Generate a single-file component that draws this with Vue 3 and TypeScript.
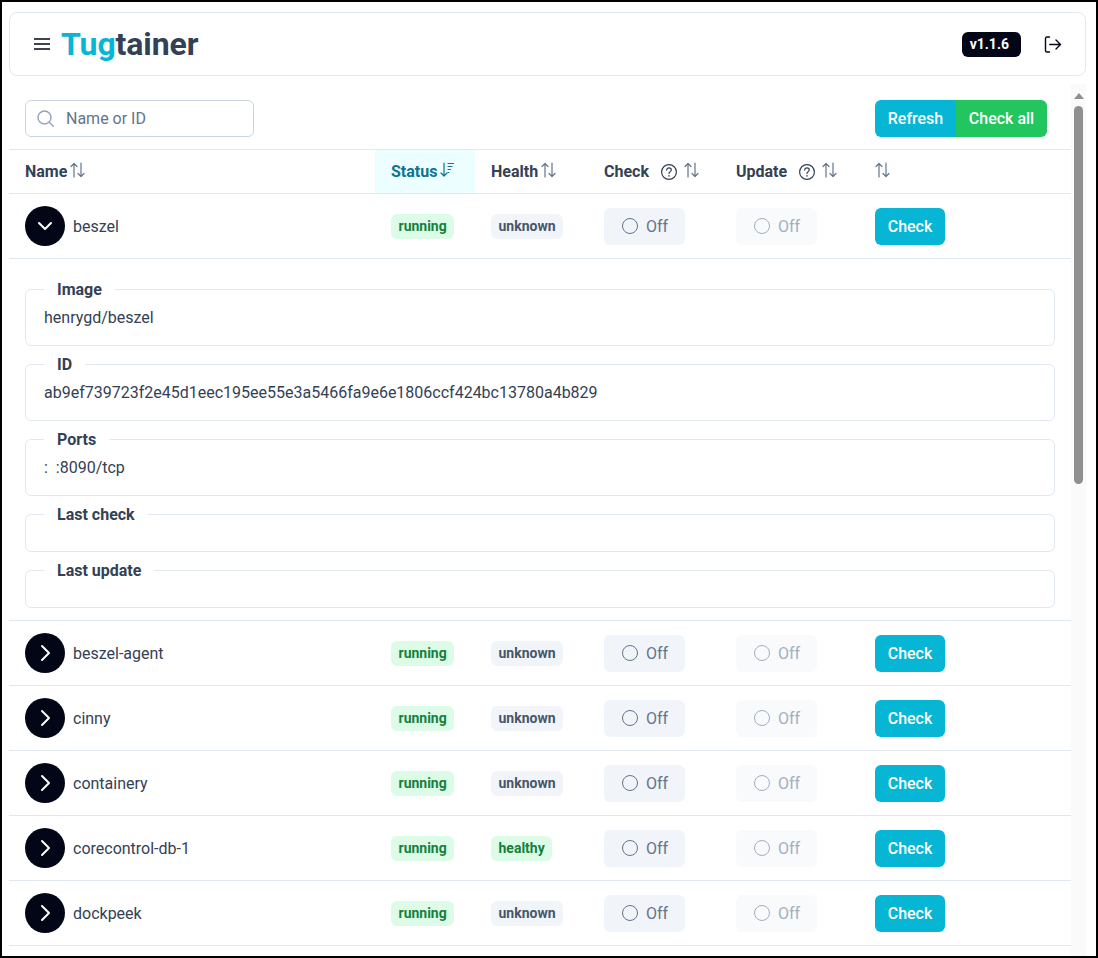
<template>
  <div class="page">
    <header class="topbar">
      <div class="topbar__left">
        <button class="icon-btn" type="button" aria-label="Menu">
          <svg width="16" height="12" viewBox="0 0 16 12" fill="none" stroke="#020617" stroke-width="1.6">
            <path d="M0 1h16M0 6h16M0 11h16" />
          </svg>
        </button>
        <h1 class="logo"><span class="logo__accent">Tug</span>tainer</h1>
      </div>
      <div class="topbar__right">
        <span class="version">v1.1.6</span>
        <button class="icon-btn" type="button" aria-label="Log out">
          <svg width="18" height="17" viewBox="0 0 18 17" fill="none" stroke="#020617" stroke-width="1.4" stroke-linecap="round" stroke-linejoin="round">
            <path d="M5.500 1H3C2.100 1 1.500 1.600 1.500 2.500v12c0 .9.6 1.500 1.500 1.500h2.500" />
            <path d="M5.800 8.500h10.700M12 4l4.500 4.500L12 13" />
          </svg>
        </button>
      </div>
    </header>

    <div class="main">
      <div class="content">
        <div class="toolbar">
          <label class="search">
            <svg width="17" height="17" viewBox="0 0 17 17" fill="none" stroke="#94a3b8" stroke-width="1.4" stroke-linecap="round">
              <circle cx="7.500" cy="7.500" r="6.500" />
              <path d="M12.300 12.300l4 4" />
            </svg>
            <input type="text" placeholder="Name or ID" />
          </label>
          <div class="actions">
            <button class="btn btn--cyan btn--left" type="button">Refresh</button>
            <button class="btn btn--green btn--right" type="button">Check all</button>
          </div>
        </div>

        <div class="row row--head">
          <div v-for="col in columns" :key="col.key" class="head-cell" :class="{ 'head-cell--active': col.active }">
            <span v-if="col.label" class="head-cell__label">{{ col.label }}</span>
            <svg v-if="col.help" class="help" width="16" height="16" viewBox="0 0 16 16" fill="none" stroke="#334155" stroke-width="1.200" stroke-linecap="round">
              <circle cx="8" cy="8" r="7.400" />
              <path d="M5.700 6.100C5.700 4.800 6.700 3.900 8 3.900s2.300.9 2.300 2.100c0 1.700-2.300 1.600-2.300 3.500" />
              <path d="M8 11.800v.2" stroke-width="1.500" />
            </svg>
            <svg v-if="col.active" class="sort" width="14" height="16" viewBox="0 0 14 16" fill="none" stroke="currentColor" stroke-width="1.200" stroke-linecap="round" stroke-linejoin="round">
              <path d="M4 1v13M1 11l3 3 3-3" />
              <path d="M8 1.500h5.500M8 4.500h4M8 7.500h2.500M8 10.500h.8" />
            </svg>
            <svg v-else class="sort" width="15" height="16" viewBox="0 0 15 16" fill="none" stroke="#64748b" stroke-width="1.200" stroke-linecap="round" stroke-linejoin="round">
              <path d="M4 15V1.500M1 4.500l3-3 3 3" />
              <path d="M11 1v13.500M8 11.500l3 3 3-3" />
            </svg>
          </div>
        </div>

        <template v-for="item in containers" :key="item.name">
          <div class="row">
            <div class="cell cell--name">
              <button class="expander" type="button" :aria-label="'Toggle ' + item.name">
                <svg v-if="item.details" width="18" height="18" viewBox="0 0 18 18" fill="none" stroke="#fff" stroke-width="2" stroke-linecap="round" stroke-linejoin="round">
                  <path d="M3 6l6 6 6-6" />
                </svg>
                <svg v-else width="18" height="18" viewBox="0 0 18 18" fill="none" stroke="#fff" stroke-width="2" stroke-linecap="round" stroke-linejoin="round">
                  <path d="M6 2l7 7-7 7" />
                </svg>
              </button>
              <span>{{ item.name }}</span>
            </div>
            <div class="cell"><span class="badge badge--green">running</span></div>
            <div class="cell">
              <span class="badge" :class="item.health === 'healthy' ? 'badge--green' : 'badge--gray'">{{ item.health }}</span>
            </div>
            <div class="cell">
              <button class="toggle" type="button">
                <span class="toggle__dot"></span>Off
              </button>
            </div>
            <div class="cell">
              <button class="toggle toggle--disabled" type="button" disabled>
                <span class="toggle__dot"></span>Off
              </button>
            </div>
            <div class="cell">
              <button class="btn btn--cyan btn--check" type="button">Check</button>
            </div>
          </div>

          <div v-if="item.details" class="details">
            <fieldset v-for="field in item.details" :key="field.label" class="field">
              <legend>{{ field.label }}</legend>
              <div class="field__value">{{ field.value }}</div>
            </fieldset>
          </div>
        </template>
      </div>

      <div class="scrollbar">
        <span class="scrollbar__arrow"></span>
        <span class="scrollbar__thumb"></span>
      </div>
    </div>
  </div>
</template>

<script setup lang="ts">
interface Column {
  key: string;
  label: string;
  active?: boolean;
  help?: boolean;
}

interface Detail {
  label: string;
  value: string;
}

interface Container {
  name: string;
  health: string;
  details?: Detail[];
}

const columns: Column[] = [
  { key: 'name', label: 'Name' },
  { key: 'status', label: 'Status', active: true },
  { key: 'health', label: 'Health' },
  { key: 'check', label: 'Check', help: true },
  { key: 'update', label: 'Update', help: true },
  { key: 'actions', label: '' },
];

const containers: Container[] = [
  {
    name: 'beszel',
    health: 'unknown',
    details: [
      { label: 'Image', value: 'henrygd/beszel' },
      { label: 'ID', value: 'ab9ef739723f2e45d1eec195ee55e3a5466fa9e6e1806ccf424bc13780a4b829' },
      { label: 'Ports', value: ':\u00a0\u00a0:8090/tcp' },
      { label: 'Last check', value: '' },
      { label: 'Last update', value: '' },
    ],
  },
  { name: 'beszel-agent', health: 'unknown' },
  { name: 'cinny', health: 'unknown' },
  { name: 'containery', health: 'unknown' },
  { name: 'corecontrol-db-1', health: 'healthy' },
  { name: 'dockpeek', health: 'unknown' },
];
</script>

<style>
html,
body {
  margin: 0;
  background: #fff;
}
</style>

<style scoped>
.page {
  box-sizing: border-box;
  display: flex;
  flex-direction: column;
  height: 958px;
  padding: 10px 10px 0 7px;
  overflow: hidden;
  border: 2px solid #000;
  background: #fff;
  color: #334155;
  font-family: Roboto, "Liberation Sans", sans-serif;
  font-size: 16px;
}

.topbar {
  display: flex;
  flex: none;
  align-items: center;
  justify-content: space-between;
  box-sizing: border-box;
  height: 64px;
  padding: 0 16px 0 24px;
  border: 1px solid #e2e8f0;
  border-radius: 8px;
}

.topbar__left,
.topbar__right {
  display: flex;
  align-items: center;
}

.topbar__left {
  gap: 12px;
}

.topbar__right {
  gap: 23px;
  padding-right: 7px;
}

.icon-btn {
  display: flex;
  padding: 0;
  border: 0;
  background: none;
}

.logo {
  margin: 0 0 0 -1px;
  color: #334155;
  font-size: 32px;
  font-weight: 700;
  line-height: 38px;
  letter-spacing: -0.1px;
}

.logo__accent {
  color: #06b6d4;
}

.version {
  display: flex;
  align-items: center;
  height: 25px;
  padding: 0 12px 0 8px;
  border-radius: 6px;
  background: #020617;
  color: #fff;
  font-size: 14px;
  font-weight: 700;
}

.main {
  display: flex;
  flex: 1;
  min-height: 0;
  margin-top: 8px;
}

.content {
  flex: 1;
  min-width: 0;
}

.toolbar {
  display: flex;
  align-items: center;
  justify-content: space-between;
  height: 37px;
  padding: 16px 24px 12px 16px;
}

.search {
  display: flex;
  align-items: center;
  gap: 12px;
  box-sizing: border-box;
  width: 229px;
  height: 37px;
  padding: 0 11px;
  border: 1px solid #cbd5e1;
  border-radius: 6px;
}

.search input {
  width: 170px;
  padding: 0;
  border: 0;
  outline: none;
  color: #334155;
  font: inherit;
}

.search input::placeholder {
  color: #64748b;
  opacity: 1;
}

.actions {
  display: flex;
}

.btn {
  height: 37px;
  padding: 0;
  border: 0;
  border-radius: 6px;
  color: #fff;
  font-family: inherit;
  font-size: 16px;
  font-weight: 500;
  white-space: nowrap;
}

.btn--cyan {
  background: #06b6d4;
}

.btn--green {
  background: #22c55e;
}

.btn--left {
  width: 81px;
  border-radius: 6px 0 0 6px;
}

.btn--right {
  width: 91px;
  border-radius: 0 6px 6px 0;
}

.btn--check {
  width: 70px;
}

.row {
  display: grid;
  grid-template-columns: 366px 100px 113px 132px 139px 1fr;
  align-items: center;
  box-sizing: border-box;
  height: 65px;
  border-bottom: 1px solid #e2e8f0;
}

.row--head {
  align-items: stretch;
  height: 45px;
  border-top: 1px solid #e2e8f0;
}

.head-cell {
  display: flex;
  align-items: center;
  padding-left: 16px;
  font-weight: 700;
}

.head-cell--active {
  background: #ecfeff;
  color: #0e7490;
}

.head-cell__label {
  margin-right: 3px;
}

.sort {
  margin-top: -4px;
}

.help {
  margin: 0 7px 0 9px;
}

.cell {
  padding-left: 16px;
}

.cell--name {
  display: flex;
  align-items: center;
  gap: 8px;
}

.expander {
  display: flex;
  align-items: center;
  justify-content: center;
  width: 40px;
  height: 40px;
  padding: 0;
  border: 0;
  border-radius: 50%;
  background: #020617;
}

.badge {
  display: inline-flex;
  align-items: center;
  height: 25px;
  padding: 0 7.5px;
  border-radius: 6px;
  font-size: 14px;
  font-weight: 700;
}

.badge--green {
  background: #dcfce7;
  color: #15803d;
}

.badge--gray {
  background: #f1f5f9;
  color: #475569;
}

.toggle {
  display: inline-flex;
  align-items: center;
  gap: 8px;
  box-sizing: border-box;
  width: 81px;
  height: 37px;
  padding: 0 0 0 18px;
  border: 0;
  border-radius: 6px;
  background: #f1f5f9;
  color: #64748b;
  font-family: inherit;
  font-size: 16px;
}

.toggle__dot {
  box-sizing: border-box;
  width: 16px;
  height: 16px;
  border: 1.5px solid #64748b;
  border-radius: 50%;
}

.toggle--disabled {
  background: #f8fafc;
  color: #a3afbf;
}

.toggle--disabled .toggle__dot {
  border-color: #a3afbf;
}

.details {
  display: flex;
  flex-direction: column;
  gap: 5px;
  padding: 17px 16px 12px;
  border-bottom: 1px solid #e2e8f0;
}

.field {
  min-width: 0;
  margin: 0;
  padding: 4px 18px 15px;
  border: 1px solid #e2e8f0;
  border-radius: 6px;
}

.field legend {
  padding: 2px 13px 0;
  font-weight: 700;
  line-height: 24px;
}

.field__value {
  min-height: 5px;
  line-height: 24px;
}

.scrollbar {
  display: flex;
  flex: none;
  flex-direction: column;
  align-items: center;
  box-sizing: border-box;
  width: 15px;
  padding-top: 9px;
  background: #fafafa;
}

.scrollbar__arrow {
  width: 0;
  height: 0;
  border-right: 5px solid transparent;
  border-bottom: 6px solid #8f8f8f;
  border-left: 5px solid transparent;
}

.scrollbar__thumb {
  width: 9px;
  height: 378px;
  margin-top: 7px;
  border-radius: 5px;
  background: #8f8f8f;
}
</style>
